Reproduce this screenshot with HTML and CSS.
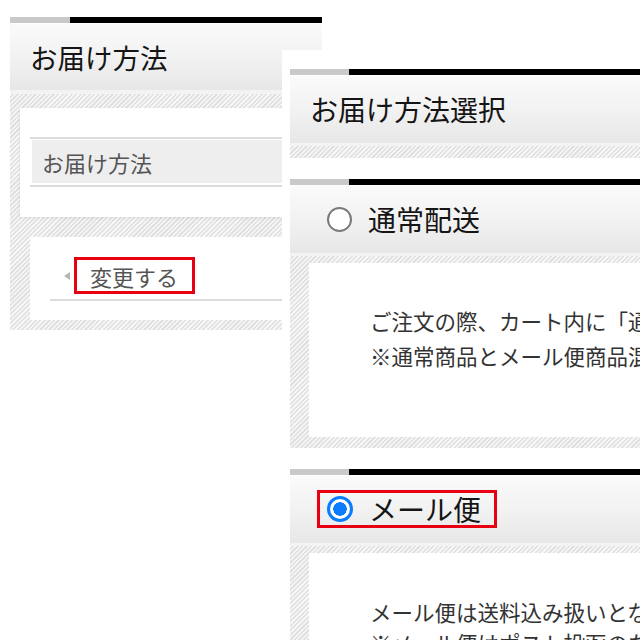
FILE: index.html
```html
<!DOCTYPE html>
<html lang="ja">
<head>
<meta charset="utf-8">
<title>お届け方法</title>
<link rel="stylesheet" href="styles.css">
</head>
<body>
<div class="desk">
  <section class="win win-left">
    <div class="bar"></div>
    <h2 class="head head-left">お届け方法</h2>
    <div class="hatch hatch-left">
      <div class="card card-summary">
        <div class="field"><div class="field-label">お届け方法</div></div>
      </div>
      <div class="card card-action">
        <div class="action-row"><span class="tri"></span><a class="change">変更する</a></div>
      </div>
    </div>
  </section>

  <section class="win win-right">
    <div class="bar"></div>
    <h2 class="head head-main">お届け方法選択</h2>
    <div class="hatch hatch-strip"></div>

    <div class="option">
      <div class="bar"></div>
      <div class="head head-option">
        <label class="opt-label"><span class="radio"></span>通常配送</label>
      </div>
      <div class="hatch hatch-body">
        <div class="box box-normal">
          <p>ご注文の際、カート内に「通常配送」をお選びください。</p>
          <p class="p-gap">※通常商品とメール便商品混在の場合は通常配送となります。</p>
        </div>
      </div>
    </div>

    <div class="option">
      <div class="bar"></div>
      <div class="head head-option">
        <label class="opt-label opt-marked"><span class="radio radio-on"></span>メール便</label>
      </div>
      <div class="hatch hatch-body">
        <div class="box box-mail">
          <p>メール便は送料込み扱いとなります。</p>
          <p>※メール便はポスト投函のため日時指定はできません。</p>
        </div>
      </div>
    </div>
  </section>
</div>
</body>
</html>
```

FILE: styles.css
```css
* { box-sizing: border-box; }
html, body { margin: 0; padding: 0; background: #fff; }
body { font-family: "Noto Sans CJK JP", "Noto Sans", sans-serif; }

.desk {
  position: relative;
  width: 640px;
  height: 640px;
  overflow: hidden;
  background: #fff;
}

.win {
  position: absolute;
  background: #fff;
}

.win-left {
  left: 10px;
  top: 17px;
  width: 312px;
}

.win-right {
  left: 282px;
  top: 50px;
  width: 358px;
  height: 590px;
  padding: 19px 0 0 8px;
  overflow: hidden;
}

.bar {
  height: 6px;
  background: linear-gradient(to right, #c9c9c9 0 59px, #000 59px);
}
.win-left .bar {
  background: linear-gradient(to right, #c9c9c9 0 60px, #000 60px);
}

.head {
  margin: 0;
  height: 71px;
  display: flex;
  align-items: center;
  padding-left: 20px;
  font-size: 28px;
  font-weight: normal;
  color: #151515;
  background: linear-gradient(#fbfbfb, #f2f2f2 50%, #e7e7e7);
  box-shadow: inset 0 1px 0 #fff;
  border-bottom: 3px solid #f3f3f3;
  white-space: nowrap;
}

.head-left {
  font-size: 27.5px;
  border-bottom-width: 4px;
}

.hatch {
  background: repeating-linear-gradient(135deg, #f6f6f6 0 1.6px, #e1e1e1 1.6px 3.2px);
}

.hatch-left {
  padding: 14px 0 10px 10px;
}

.card {
  background: #fff;
}

.card-summary {
  padding: 29px 0 30px 10px;
  box-shadow: 0 1px 3px rgba(0, 0, 0, 0.08);
}

.field {
  border-top: 2px solid #dcdcdc;
  border-bottom: 2px solid #dcdcdc;
  padding: 1px 0 2px 2px;
}

.field-label {
  height: 43px;
  display: flex;
  align-items: center;
  padding-left: 10px;
  background: #eeeeee;
  color: #555;
  font-size: 22px;
}

.card-action {
  margin: 20px 0 0 10px;
  padding: 20px 0 19px 20px;
}

.action-row {
  display: flex;
  align-items: center;
  padding-left: 14px;
  padding-bottom: 5px;
  border-bottom: 2px solid #dcdcdc;
}

.tri {
  width: 0;
  height: 0;
  border-top: 4px solid transparent;
  border-bottom: 4px solid transparent;
  border-right: 6px solid #b5b5b5;
  margin-right: 4px;
}

.change {
  display: flex;
  align-items: center;
  height: 37px;
  width: 121px;
  padding-left: 13px;
  border: 3px solid #e60012;
  color: #555;
  font-size: 22px;
  text-decoration: none;
}

.hatch-strip {
  height: 12px;
}

.option {
  margin-top: 21px;
}

.head-option {
  padding-left: 27px;
}

.opt-label {
  display: flex;
  align-items: center;
  height: 38px;
  padding: 0 13px 0 7px;
  border: 3px solid transparent;
  font-size: 28px;
  color: #151515;
}

.opt-marked {
  border-color: #e60012;
}

.radio {
  width: 25px;
  height: 25px;
  border-radius: 50%;
  border: 2px solid #7a7a7a;
  background: #fff;
  margin-right: 16px;
  flex: none;
}

.radio-on {
  width: 26px;
  height: 26px;
  border: 3px solid #0a7cff;
  background: radial-gradient(circle, #0a7cff 0 6.5px, #fff 7px);
}

.hatch-body {
  padding: 7px 0 11px 19px;
}

.box {
  background: #fff;
  padding: 42px 0 0 61px;
  font-size: 21.5px;
  line-height: 31px;
  color: #333;
  white-space: nowrap;
}

.box p {
  margin: 0;
}

.box-normal {
  height: 174px;
}

.p-gap {
  margin-top: 4px !important;
}

.box-mail {
  padding-top: 43px;
  height: 200px;
}
```
